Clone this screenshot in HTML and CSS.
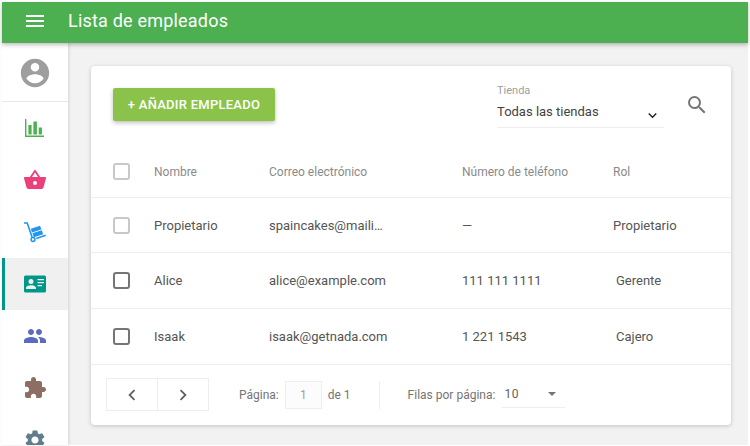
FILE: index.html
```html
<!DOCTYPE html>
<html lang="es">
<head>
<meta charset="utf-8">
<title>Lista de empleados</title>
<link rel="stylesheet" href="styles.css">
</head>
<body>
<div class="frame">
  <header class="topbar">
    <svg class="menu-icon" viewBox="0 0 24 24" width="24" height="24"><path fill="#fff" d="M3 18h18v-2H3v2zm0-5h18v-2H3v2zm0-7v2h18V6H3z"/></svg>
    <h1 class="title">Lista de empleados</h1>
  </header>
  <div class="main">
    <nav class="side">
      <div class="side-user">
        <svg viewBox="0 0 24 24" width="34" height="34"><path fill="#9e9e9e" d="M12 2C6.48 2 2 6.48 2 12s4.48 10 10 10 10-4.48 10-10S17.52 2 12 2zm0 3c1.66 0 3 1.34 3 3s-1.34 3-3 3-3-1.34-3-3 1.34-3 3-3zm0 14.2c-2.5 0-4.71-1.28-6-3.22.03-1.99 4-3.08 6-3.08 1.99 0 5.97 1.09 6 3.08-1.29 1.94-3.5 3.22-6 3.22z"/></svg>
      </div>
      <div class="side-item">
        <svg viewBox="0 0 24 24" width="24" height="24"><path fill="#4caf50" d="M2 3h1.400v16.600H21V21H2V3zm3.400 6h3.200v9.600H5.400V9zm5-3.500h3.500v13.100h-3.500V5.500zm5.300 6h3.200v7.100h-3.200v-7.100z"/></svg>
      </div>
      <div class="side-item">
        <svg viewBox="0 0 24 24" width="24" height="24"><path fill="#ec407a" d="M17.210 9l-4.380-6.560a1 1 0 0 0-1.660 0L6.790 9H2a1 1 0 0 0-1 1.270l2.540 9.270A2 2 0 0 0 5.500 21h13a2 2 0 0 0 1.970-1.460L23 10.270A1 1 0 0 0 22 9h-4.790zM9 9l3-4.400L15 9H9zm3 8a2 2 0 1 1 0-4 2 2 0 0 1 0 4z"/></svg>
      </div>
      <div class="side-item">
        <svg viewBox="0 0 24 24" width="24" height="24"><path fill="none" stroke="#2196f3" stroke-width="1.600" d="M1 3h3.200l5 14.500"/><circle cx="10" cy="19.500" r="1.900" fill="none" stroke="#2196f3" stroke-width="1.500"/><path fill="#2196f3" d="M7.800 8.800l9.300-3 1.200 3.600-9.300 3zM9.500 13.200l9.300-3 1.400 4-9.300 3zM13 17.800l9.500-3.200.5 1.500-9.500 3.200z"/></svg>
      </div>
      <div class="side-item is-active">
        <svg viewBox="0 0 24 24" width="24" height="24"><path fill-rule="evenodd" fill="#009688" d="M2.500 3.500h19a1.500 1.500 0 0 1 1.500 1.500v14a1.500 1.500 0 0 1-1.500 1.500h-19A1.500 1.500 0 0 1 1 19V5a1.500 1.500 0 0 1 1.500-1.500zM8 7a2.500 2.500 0 1 0 0 5 2.500 2.500 0 0 0 0-5zm-5 10h10v-1.200c0-1.700-3.300-2.500-5-2.500s-5 .8-5 2.500V17zM14.500 7v1.300H21V7h-6.500zm0 3v1.300H21V10h-6.500zm0 3v1.300H19V13h-4.500z"/></svg>
      </div>
      <div class="side-item">
        <svg viewBox="0 0 24 24" width="24" height="24"><path fill="#5c6bc0" d="M16 11c1.660 0 2.990-1.340 2.990-3S17.660 5 16 5s-3 1.340-3 3 1.340 3 3 3zm-8 0c1.660 0 2.990-1.340 2.990-3S9.660 5 8 5 5 6.340 5 8s1.340 3 3 3zm0 2c-2.330 0-7 1.170-7 3.500V19h14v-2.500c0-2.330-4.670-3.500-7-3.500zm8 0c-.29 0-.62.020-.97.050 1.160.84 1.970 1.970 1.970 3.450V19h6v-2.500c0-2.330-4.670-3.500-7-3.500z"/></svg>
      </div>
      <div class="side-item">
        <svg viewBox="0 0 24 24" width="24" height="24"><path fill="#8d6e63" d="M20.500 11H19V7c0-1.100-.9-2-2-2h-4V3.500C13 2.120 11.880 1 10.500 1S8 2.120 8 3.500V5H4c-1.100 0-1.990.9-1.990 2v3.800H3.500c1.490 0 2.700 1.210 2.700 2.700s-1.210 2.700-2.700 2.700H2V20c0 1.100.9 2 2 2h3.800v-1.500c0-1.490 1.210-2.700 2.700-2.700 1.490 0 2.700 1.210 2.700 2.700V22H17c1.100 0 2-.9 2-2v-4h1.500c1.380 0 2.500-1.120 2.500-2.500S21.880 11 20.500 11z"/></svg>
      </div>
      <div class="side-item">
        <svg viewBox="0 0 24 24" width="24" height="24"><path fill="#607d8b" d="M19.140 12.940c.04-.3.060-.61.060-.94 0-.32-.02-.64-.07-.94l2.030-1.580a.49.490 0 0 0 .12-.61l-1.920-3.320a.488.488 0 0 0-.59-.22l-2.390.96c-.5-.38-1.030-.7-1.620-.94l-.36-2.540a.484.484 0 0 0-.48-.41h-3.840c-.24 0-.43.170-.47.410l-.36 2.540c-.59.240-1.130.570-1.620.94l-2.390-.96c-.22-.08-.47 0-.59.220L2.740 8.870c-.12.210-.08.470.12.610l2.030 1.580c-.05.3-.09.630-.09.940s.02.640.07.940l-2.030 1.580a.49.490 0 0 0-.12.610l1.920 3.320c.12.220.37.290.59.220l2.390-.96c.5.380 1.030.7 1.620.94l.36 2.540c.05.240.24.410.48.410h3.840c.24 0 .44-.17.47-.41l.36-2.540c.59-.24 1.130-.56 1.620-.94l2.390.96c.22.080.47 0 .59-.22l1.920-3.320c.12-.22.070-.47-.12-.61l-2.010-1.580zM12 15.600c-1.980 0-3.600-1.620-3.600-3.600s1.620-3.600 3.600-3.600 3.600 1.620 3.600 3.600-1.620 3.600-3.600 3.600z"/></svg>
      </div>
    </nav>
    <main class="content">
      <section class="card">
        <div class="toolbar">
          <button class="add-btn" type="button">+ AÑADIR EMPLEADO</button>
          <div class="toolbar-right">
            <div class="store">
              <div class="store-label">Tienda</div>
              <div class="store-value"><span>Todas las tiendas</span><svg viewBox="0 0 24 24" width="17" height="17"><path fill="#212121" d="M7.410 8.590 12 13.170l4.590-4.580L18 10l-6 6-6-6z"/></svg></div>
            </div>
            <svg class="search" viewBox="0 0 24 24" width="24" height="24"><path fill="#757575" d="M15.500 14h-.79l-.28-.27A6.470 6.470 0 0 0 16 9.500 6.500 6.500 0 1 0 9.500 16c1.610 0 3.090-.59 4.230-1.570l.27.28v.79l5 4.990L20.490 19l-4.990-5zm-6 0C7.010 14 5 11.990 5 9.500S7.010 5 9.500 5 14 7.010 14 9.500 11.990 14 9.500 14z"/></svg>
          </div>
        </div>
        <div class="row head">
          <span class="check is-light"></span>
          <span class="cell c-name">Nombre</span>
          <span class="cell c-mail">Correo electrónico</span>
          <span class="cell c-phone">Número de teléfono</span>
          <span class="cell c-role">Rol</span>
        </div>
        <div class="row">
          <span class="check is-light"></span>
          <span class="cell c-name">Propietario</span>
          <span class="cell c-mail">spaincakes@maili…</span>
          <span class="cell c-phone">—</span>
          <span class="cell c-role">Propietario</span>
        </div>
        <div class="row">
          <span class="check"></span>
          <span class="cell c-name">Alice</span>
          <span class="cell c-mail">alice@example.com</span>
          <span class="cell c-phone">111 111 1111</span>
          <span class="cell c-role shifted">Gerente</span>
        </div>
        <div class="row">
          <span class="check"></span>
          <span class="cell c-name">Isaak</span>
          <span class="cell c-mail">isaak@getnada.com</span>
          <span class="cell c-phone">1 221 1543</span>
          <span class="cell c-role shifted">Cajero</span>
        </div>
        <div class="pager">
          <div class="pager-btns">
            <span class="pager-btn"><svg viewBox="0 0 24 24" width="22" height="22"><path fill="#616161" d="M15.410 7.410 14 6l-6 6 6 6 1.410-1.410L10.830 12z"/></svg></span>
            <span class="pager-btn"><svg viewBox="0 0 24 24" width="22" height="22"><path fill="#616161" d="M10 6 8.590 7.410 13.170 12l-4.580 4.590L10 18l6-6z"/></svg></span>
          </div>
          <span class="pager-text page-label">Página:</span>
          <span class="page-box">1</span>
          <span class="pager-text">de 1</span>
          <span class="pager-sep"></span>
          <span class="pager-text">Filas por página:</span>
          <div class="rows-select"><span>10</span><span class="caret"></span></div>
        </div>
      </section>
    </main>
  </div>
</div>
</body>
</html>
```
FILE: styles.css
```css
* { box-sizing: border-box; }
html, body { margin: 0; height: 100%; }
body { background: #fff; overflow: hidden; font-family: Roboto, "Liberation Sans", sans-serif; }
.frame { width: 750px; height: 446px; padding: 2px 2px 1px 2px; display: flex; flex-direction: column; overflow: hidden; }
.topbar { height: 41px; flex: none; background: #4caf50; display: flex; align-items: center; padding: 0 0 4px 21px; box-shadow: 0 2px 4px rgba(0,0,0,.25); position: relative; z-index: 2; }
.menu-icon { flex: none; }
.title { margin: 0 0 0 21px; font-size: 18px; font-weight: 400; color: #fff; letter-spacing: .2px; }
.main { flex: 1; display: flex; min-height: 0; background: #f2f2f2; }
.side { width: 66px; flex: none; background: #fff; box-shadow: 1px 0 3px rgba(0,0,0,.12); overflow: hidden; display: flex; flex-direction: column; position: relative; z-index: 1; }
.side-user { height: 59px; flex: none; display: flex; align-items: center; justify-content: center; padding-top: 2px; border-bottom: 1px solid #e8e8e8; }
.side-item { height: 52px; flex: none; display: flex; align-items: center; justify-content: center; }
.is-active { background: #f0f0f0; box-shadow: inset 3px 0 0 #009688; }
.content { flex: 1; padding: 23px 0 0 23px; min-width: 0; }
.card { width: 640px; height: 359px; background: #fff; border-radius: 4px; box-shadow: 0 1px 4px rgba(0,0,0,.2); }
.toolbar { height: 87px; display: flex; justify-content: space-between; padding: 22px 22px 0 22px; }
.add-btn { width: 162px; height: 33px; background: #8bc34a; border: 0; border-radius: 2px; color: #fff; font: 500 13px Roboto, sans-serif; letter-spacing: .25px; box-shadow: 0 2px 4px rgba(0,0,0,.25); }
.toolbar-right { display: flex; align-items: flex-start; gap: 21px; margin-top: -4px; }
.store { width: 167px; }
.store-label { font-size: 11px; color: #9e9e9e; line-height: 14px; }
.store-value { height: 29px; margin-top: 1px; padding-bottom: 3px; display: flex; justify-content: space-between; align-items: center; font-size: 13px; color: #424242; border-bottom: 1px solid #eee; }
.store-value svg { margin-top: 7px; margin-right: 3px; }
.search { margin-top: 9px; }
.row { height: 56px; display: flex; align-items: center; padding-left: 22px; border-top: 1px solid #eee; font-size: 13px; color: #555; }
.head { height: 44px; border-top: 0; font-size: 12px; color: #8a8a8a; padding-bottom: 7px; }
.head + .row { height: 55px; }
.check { width: 17px; height: 17px; flex: none; border: 2px solid #757575; border-radius: 3px; }
.check.is-light { border-color: #c8c8c8; }
.cell { white-space: nowrap; }
.c-name { width: 115px; margin-left: 24px; }
.c-mail { width: 193px; }
.c-phone { width: 151px; }
.shifted { margin-left: 3px; }
.pager { border-top: 1px solid #eee; height: 61px; padding: 0 0 1px 15px; display: flex; align-items: center; font-size: 12px; color: #757575; }
.pager-btns { display: flex; width: 103px; height: 33px; border: 1px solid #eee; }
.pager-btn { flex: 1; display: flex; align-items: center; justify-content: center; }
.pager-btn + .pager-btn { border-left: 1px solid #eee; }
.page-label { margin-left: 30px; }
.page-box { width: 37px; height: 28px; margin: 0 6px; display: flex; align-items: center; justify-content: center; border: 1px solid #eee; background: #fcfcfc; color: #9e9e9e; }
.pager-sep { width: 1px; height: 28px; background: #eee; margin: 0 28px; }
.rows-select { width: 63px; height: 26px; margin-left: 7px; padding: 0 9px 0 2px; display: flex; align-items: center; justify-content: space-between; border-bottom: 1px solid #eee; color: #616161; letter-spacing: .5px; }
.caret { width: 0; height: 0; border-left: 4px solid transparent; border-right: 4px solid transparent; border-top: 4px solid #757575; }
```
